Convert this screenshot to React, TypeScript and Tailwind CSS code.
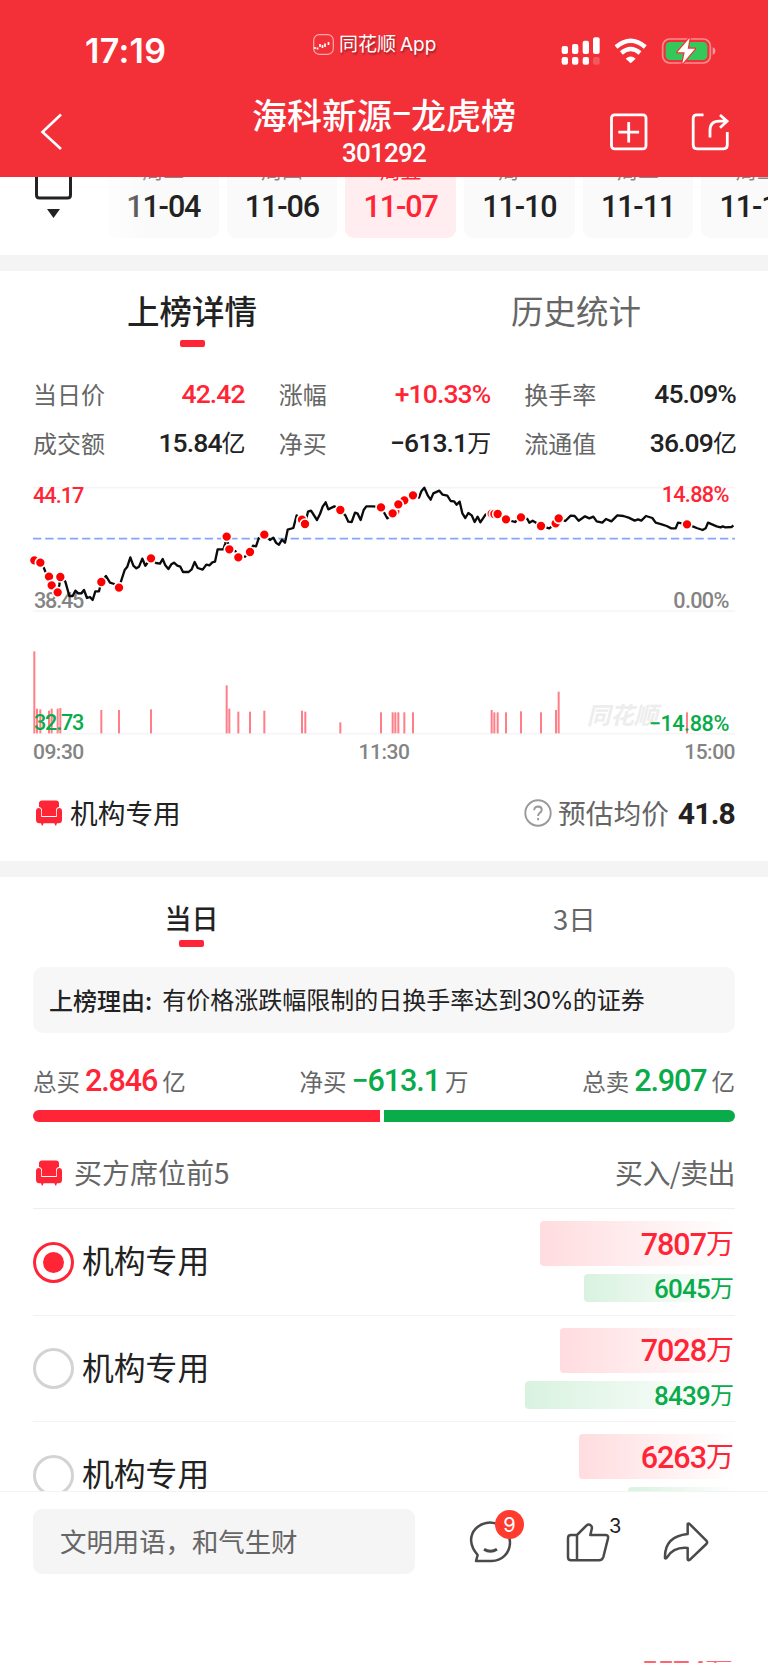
import { clsx } from "clsx";

const CJK = "font-['Noto_Sans_CJK_SC',sans-serif]";
const NUM = "font-[Roboto,'Noto_Sans_CJK_SC',sans-serif] font-medium";

const dates = [
  { week: "周二", day: "11-04" },
  { week: "周四", day: "11-06" },
  { week: "周五", day: "11-07", active: true },
  { week: "周一", day: "11-10" },
  { week: "周二", day: "11-11" },
  { week: "周三", day: "11-12" },
];

const stats = [
  { label: "当日价", value: "42.42", unit: "", up: true },
  { label: "涨幅", value: "+10.33%", unit: "", up: true },
  { label: "换手率", value: "45.09%", unit: "" },
  { label: "成交额", value: "15.84", unit: "亿" },
  { label: "净买", value: "−613.1", unit: "万" },
  { label: "流通值", value: "36.09", unit: "亿" },
];

const seats = [
  { name: "机构专用", buy: "7807", sell: "6045", buyWidth: 195, sellWidth: 151, checked: true },
  { name: "机构专用", buy: "7028", sell: "8439", buyWidth: 175.5, sellWidth: 210.5 },
  { name: "机构专用", buy: "6263", sell: "4312", buyWidth: 156, sellWidth: 107 },
];

// chart space: three units per pixel
const price =
  "100,271 121,278 131,292 136,305 147,320 155,346 173,367 178,345 181,321 196,335 208,378 218,378 226,362 235,370 244,370 252,360 261,384 270,381 278,390 286,364 297,364 304,336 318,318 330,338 343,342 357,353 374,300 382,290 391,262 400,287 409,295 417,290 427,266 436,287 453,265 468,279 480,281 488,267 496,286 505,297 514,283 522,278 532,287 541,290 549,306 566,306 575,298 584,276 593,294 608,299 619,284 628,286 637,277 645,275 653,238 670,238 676,220 680,200 688,238 706,243 715,262 735,260 750,246 759,227 768,229 776,205 793,194 810,210 820,203 828,218 837,224 846,209 855,218 863,179 880,174 890,136 906,149 915,162 924,125 933,122 951,150 960,132 968,110 977,97 985,118 1003,109 1021,120 1036,136 1045,155 1055,156 1065,128 1073,131 1082,150 1091,120 1099,109 1120,109 1143,112 1153,129 1162,145 1178,130 1186,124 1195,103 1213,91 1239,76 1257,83 1264,64 1273,53 1283,76 1292,89 1300,70 1318,62 1328,74 1342,77 1352,93 1362,94 1370,104 1379,95 1387,130 1396,144 1405,129 1415,136 1424,156 1433,140 1441,157 1457,133 1475,131 1493,132 1518,148 1545,156 1563,142 1582,147 1588,158 1598,152 1608,158 1623,168 1648,175 1667,160 1676,145 1696,153 1712,137 1724,138 1736,152 1755,139 1768,145 1780,140 1790,154 1807,158 1818,147 1834,154 1852,136 1870,138 1886,143 1904,152 1914,148 1924,152 1938,138 1957,144 1967,158 1985,163 2000,168 2014,175 2027,175 2034,158 2061,163 2080,170 2090,174 2108,180 2117,175 2124,158 2150,169 2162,172 2168,169 2176,172 2195,171 2200,166";

const dots = [
  [103, 271], [121, 278], [147, 320], [155, 346], [173, 367], [181, 321], [304, 336], [357, 353],
  [453, 265], [680, 200], [688, 238], [715, 262], [750, 246], [793, 194], [906, 149], [915, 162],
  [1021, 120], [1143, 112], [1186, 124], [1178, 130], [1213, 91], [1195, 103], [1239, 76],
  [1475, 131], [1483, 132], [1493, 132], [1518, 148], [1563, 142], [1623, 168], [1667, 160],
  [1676, 145], [2061, 163],
];

const volumes = [
  [103, 544], [111, 716], [121, 718], [147, 722], [155, 716], [173, 716], [181, 714], [304, 720],
  [357, 720], [453, 718], [680, 646], [688, 716], [715, 725], [750, 725], [793, 722], [906, 722],
  [916, 725], [1021, 757], [1143, 727], [1178, 727], [1186, 727], [1195, 727], [1213, 727],
  [1239, 727], [1475, 720], [1483, 727], [1493, 727], [1518, 727], [1563, 724], [1623, 727],
  [1668, 720], [1676, 665], [2061, 727],
];

function StatusIcons() {
  return (
    <svg width="156" height="30" viewBox="160 48 468 90" fill="none">
      <g fill="#fff">
        <rect x="162" y="78" width="19" height="24" rx="6" />
        <rect x="193" y="72" width="19" height="30" rx="6" />
        <rect x="225" y="62" width="19" height="40" rx="6" />
        <rect x="256" y="52" width="20" height="50" rx="6" />
        <rect x="162" y="111" width="19" height="23" rx="6" />
        <rect x="193" y="111" width="19" height="23" rx="6" />
        <rect x="225" y="111" width="19" height="23" rx="6" />
        <rect x="256" y="111" width="20" height="23" rx="6" opacity=".2" />
        <path d="M354 116q15-13 30 0l-15 14z" />
      </g>
      <path d="M325 81q44-37 88 0M341 99q28-24 56 0" stroke="#fff" strokeWidth="13" />
      <rect x="465" y="57" width="143" height="72" rx="21" stroke="#fff" strokeOpacity=".45" strokeWidth="5" />
      <path d="M615 82q8 2 8 11t-8 11z" fill="#fff" fillOpacity=".5" />
      <rect x="474" y="66" width="125" height="54" rx="13" fill="#34c759" />
      <path
        d="M546 54l-37 43h22l-7 34 38-45h-22z"
        fill="#fff"
        stroke="#f33038"
        strokeWidth="7"
        paintOrder="stroke"
        strokeLinejoin="round"
      />
    </svg>
  );
}

function Sofa() {
  return (
    <svg width="26" height="26" viewBox="0 0 26 26" fill="#ff2436">
      <path d="M6 .5h14q3 0 3 3V7q-3 .7-3 4v5H6v-5Q6 7.700 3 7V3.500q0-3 3-3z" />
      <path
        d="M2.500 8q2.700.2 2.700 3v6h15.600v-6q0-2.800 2.700-3 2.500.3 2.500 2.700v9q0 3.500-3.500 3.500h-19Q0 23.200 0 19.700v-9q0-2.400 2.500-2.700z"
        stroke="#fff"
        strokeWidth="1.400"
        paintOrder="stroke"
      />
      <path d="M5 23h2.600l-.8 2.600H5.800zM18.400 23H21l-.8 2.600h-1z" />
    </svg>
  );
}

function Chart() {
  return (
    <svg
      className="shrink-0 overflow-visible"
      width="703"
      height="260"
      viewBox="99 30 2109 780"
      fontFamily="Roboto, sans-serif"
      fontSize="65"
      fontWeight="500"
    >
      <path d="M99 53H2205M99 423H2205M99 791H2205" stroke="#f5f5f5" strokeWidth="5" />
      <path d="M99 206H2205" stroke="#84a5fb" strokeWidth="5.500" strokeDasharray="25 11.800" />
      <g fill="#848484">
        <text x="102" y="414" textLength="151">38.45</text>
        <text x="2020" y="414" textLength="168">0.00%</text>
      </g>
      <text
        x="1760"
        y="762"
        fontFamily="Noto Sans CJK SC, sans-serif"
        fontSize="71"
        fontWeight="700"
        fontStyle="italic"
        fill="#ededed"
      >
        同花顺
      </text>
      <g fill="#ff2436">
        <text x="99" y="98" textLength="154">44.17</text>
        <text x="1985" y="97" textLength="203">14.88%</text>
      </g>
      {volumes.map(([x, y]) => (
        <rect key={x} x={x - 3} y={y} width="6" height={790 - y} fill="#ff7e88" />
      ))}
      <g fill="#09ab4b">
        <text x="102" y="780" textLength="151">32.73</text>
        <text x="1946" y="782" textLength="242">−14.88%</text>
      </g>
      <polyline points={price} fill="none" stroke="#0b0b0b" strokeWidth="7" strokeLinejoin="round" />
      {dots.map(([x, y]) => (
        <circle key={x} cx={x} cy={y} r="15" fill="#f00" stroke="#fff" strokeWidth="5" />
      ))}
    </svg>
  );
}

function Tab({ label, active, className }: { label: string; active?: boolean; className?: string }) {
  return (
    <div
      className={clsx(
        "flex flex-1 flex-col items-center",
        active ? "font-medium text-[#222]" : "text-[#666]",
        className
      )}
    >
      <span>{label}</span>
      {active && <span className="h-[7px] w-[25px] rounded-[2px] bg-[#ff2436]" />}
    </div>
  );
}

function Total({ label, value, unit, color }: { label: string; value: string; unit: string; color: string }) {
  return (
    <div className="flex items-baseline text-[23.500px] leading-[36px] text-[#666]">
      <span>{label}</span>
      <span className={clsx("ml-[5px] mr-[5px] text-[30.500px] tracking-[-1.1px]", NUM, color)}>{value}</span>
      <span>{unit}</span>
    </div>
  );
}

export default function App() {
  return (
    <div className={clsx("relative flex h-[1663px] w-[768px] flex-col overflow-hidden bg-white text-[#222]", CJK)}>
      {/* Header */}
      <header className="h-[177px] shrink-0 bg-[#f33038] text-white">
        <div className="flex h-[88px] items-start pl-[85px] pr-[51px]">
          <span className="mt-[34px] w-[228px] font-[Inter,sans-serif] text-[34px] font-semibold leading-[34px] tracking-[0.3px]">
            17:19
          </span>
          <div className="mt-[32px] flex items-center gap-[5px]">
            <svg width="21" height="21" viewBox="0 0 21 21" fill="none">
              <rect x=".7" y=".7" width="19.600" height="19.600" rx="5.500" stroke="#fff" strokeOpacity=".6" strokeWidth="1.200" />
              <path d="M2 13v2M4.500 13.500v2M7 10v3M9.500 11v3M12 9.500V13M15.500 8v3" stroke="#fff" strokeWidth="1.700" />
            </svg>
            <span className="text-[19px] leading-[22px] [text-shadow:1px_2px_2px_rgba(0,0,0,.35)]">
              同花顺<span className="ml-[4px] font-[Inter,sans-serif] text-[19px]">App</span>
            </span>
          </div>
          <div className="ml-auto mt-[36px]">
            <StatusIcons />
          </div>
        </div>
        <div className="grid grid-cols-[1fr_auto_1fr] pl-[39px] pr-[39px]">
          <svg className="ml-[1px] mt-[24px]" width="24" height="40" viewBox="0 0 24 40" fill="none" stroke="#fff" strokeWidth="2.600">
            <path d="M21 2.500L2.500 20 21 37" />
          </svg>
          <div className="flex flex-col items-center">
            <h1 className="mt-[6px] flex text-[35px] font-medium leading-[40px]">
              海科新源
              <span className="flex w-[19px] items-center justify-center">
                <span className="font-[Roboto,sans-serif] text-[32px] font-medium">–</span>
              </span>
              龙虎榜
            </h1>
            <span className={clsx("mt-[4px] text-[26px] leading-[30px] tracking-[-0.8px]", NUM)}>301292</span>
          </div>
          <div className="mt-[24px] flex justify-end gap-[41px]">
            <svg width="40" height="40" viewBox="0 0 40 40" fill="none" stroke="#fff" strokeWidth="2.800">
              <rect x="3.500" y="2.800" width="34.500" height="34" rx="3" />
              <path d="M20.700 10v20.500M10.300 20.200h20.800" />
            </svg>
            <svg width="40" height="40" viewBox="0 0 40 40" fill="none" stroke="#fff" strokeWidth="2.800">
              <path d="M14.500 2.800H8Q4.200 2.800 4.200 6.500v26.500q0 3.800 3.800 3.800h26.500q3.800 0 3.800-3.800V20" />
              <path d="M21 25.500V18.500q0-9.300 9-9.300h7M31 3l7 6.200-7 6.500" />
            </svg>
          </div>
        </div>
      </header>

      {/* Date strip */}
      <div className="relative flex h-[78px] shrink-0 overflow-hidden">
        <div className="flex w-[108px] shrink-0 flex-col pl-[35px]">
          <svg width="37" height="42" viewBox="0 0 37 42" fill="none">
            <path d="M1.500-3V18q0 3 3 3h28q3 0 3-3V-3" stroke="#222" strokeWidth="3" />
            <path d="M12 32h13l-6.500 9z" fill="#222" />
          </svg>
        </div>
        <div className="flex gap-[8.200px]">
          {dates.map((d) => (
            <div
              key={d.day}
              className={clsx(
                "flex h-[61px] w-[110.500px] shrink-0 flex-col items-center rounded-b-[9px]",
                d.active ? "bg-[#ffedef] text-[#ff2436]" : "bg-[#fafafa]"
              )}
            >
              <span className={clsx("mt-[-20px] text-[21px] leading-[24px]", !d.active && "text-[#888]")}>{d.week}</span>
              <span className={clsx("mt-[9px] text-[30.500px] leading-[34px] tracking-[-1.1px]", NUM)}>{d.day}</span>
            </div>
          ))}
        </div>
        <div className="absolute left-[92px] top-0 h-full w-[60px] bg-linear-to-r from-white to-white/0" />
      </div>
      <div className="h-[16px] shrink-0 bg-[#f4f4f4]" />

      {/* Detail */}
      <section className="flex h-[590px] shrink-0 flex-col">
        <div className="flex h-[99px] text-[32.500px] leading-[40px]">
          <Tab label="上榜详情" active className="gap-[10px] pt-[19px]" />
          <Tab label="历史统计" className="pt-[19px]" />
        </div>
        <div className="grid grid-cols-3 gap-x-[34px] px-[33px] pr-[32px]">
          {stats.map((s) => (
            <div key={s.label} className="flex h-[49px] items-center justify-between leading-[36px]">
              <span className="relative top-[-1px] text-[24px] text-[#666]">{s.label}</span>
              <span className={clsx("text-[26.500px] tracking-[-0.9px]", NUM, s.up && "text-[#ff2436]")}>
                {s.value}
                <span className="text-[24px] font-normal">{s.unit}</span>
              </span>
            </div>
          ))}
        </div>
        <div className="mt-[12px] px-[33px]">
          <Chart />
          <div className={clsx("flex h-[24px] justify-between text-[21px] leading-[24px] text-[#848484] tracking-[-0.5px]", NUM)}>
            <span>09:30</span>
            <span>11:30</span>
            <span>15:00</span>
          </div>
        </div>
        <div className="mt-[29px] flex h-[40px] items-center px-[33px] text-[27.700px]">
          <span className="ml-[3px] mr-[8px]">
            <Sofa />
          </span>
          <span>机构专用</span>
          <svg className="ml-auto mr-[6px]" width="28" height="28" viewBox="0 0 28 28" fill="none" stroke="#999" strokeWidth="1.900">
            <circle cx="14" cy="14" r="12.700" />
            <path d="M10.200 11.200q.2-3.700 3.900-3.700 3.600.1 3.700 3.300 0 1.800-2 3.100-1.700 1.100-1.700 3.100M14.100 19v2.200" />
          </svg>
          <span className="text-[#666]">预估均价</span>
          <span className="ml-[9px] font-[Roboto,sans-serif] text-[30px] font-bold tracking-[-0.8px]">41.8</span>
        </div>
      </section>
      <div className="h-[16px] shrink-0 bg-[#f4f4f4]" />

      {/* Ranking */}
      <section className="flex shrink-0 flex-col px-[33px]">
        <div className="-mx-[33px] flex h-[90px] text-[27px] leading-[36px]">
          <Tab label="当日" active className="gap-[4px] pt-[23px]" />
          <Tab label="3日" className="pr-[2px] pt-[23px] text-[27.500px]" />
        </div>
        <div className="flex h-[66px] items-center rounded-[10px] bg-[#f7f7f7] px-[16px] text-[24px]">
          <span className="font-medium">上榜理由:</span>
          <span className="ml-[10px]">
            有价格涨跌幅限制的日换手率达到
            <span className="font-[Inter,sans-serif] tracking-[-1px]">30%</span>
            的证券
          </span>
        </div>
        <div className="mt-[30px] flex h-[36px] justify-between">
          <Total label="总买" value="2.846" unit="亿" color="text-[#ff2436]" />
          <Total label="净买" value="−613.1" unit="万" color="text-[#09ab4b]" />
          <Total label="总卖" value="2.907" unit="亿" color="text-[#09ab4b]" />
        </div>
        <div className="mt-[11px] flex h-[12px] gap-[4px]">
          <div className="w-[347px] rounded-l-full bg-[#ff2436]" />
          <div className="flex-1 rounded-r-full bg-[#09ab4b]" />
        </div>
        <div className="mt-[16px] flex h-[71px] items-center border-b-[1.500px] border-[#eee] text-[28px] leading-[40px] text-[#666]">
          <span className="ml-[3px] mr-[12px]">
            <Sofa />
          </span>
          <span className="mt-[-2px]">买方席位前5</span>
          <span className="ml-auto mt-[-2px] tracking-[-0.6px]">买入/卖出</span>
        </div>
        <div className="h-[282px] overflow-hidden">
          {seats.map((s, i) => (
            <div key={i} className="flex h-[106.500px] border-b-[1.500px] border-[#f3f3f3]">
              <div className="flex flex-1 items-center pt-[1px]">
                <span
                  className={clsx(
                    "flex size-[41px] items-center justify-center rounded-full border-3",
                    s.checked ? "border-[#ff2436]" : "border-[#d3d3d3]"
                  )}
                >
                  {s.checked && <span className="size-[21px] rounded-full bg-[#ff2436]" />}
                </span>
                <span className="ml-[8px] mt-[-4px] text-[31.800px]">{s.name}</span>
              </div>
              <div className={clsx("flex flex-col items-end pt-[12px]", NUM)}>
                <div
                  className="flex h-[45px] items-center justify-end rounded-l-[4px] bg-linear-to-r from-[#ffdcdf] to-white pr-[1px] pt-[2px] text-[30.500px] tracking-[-1px] text-[#ff2436]"
                  style={{ width: s.buyWidth }}
                >
                  {s.buy}
                  <span className="text-[28px] font-normal tracking-normal">万</span>
                </div>
                <div
                  className="mt-[8px] flex h-[28px] items-center justify-end rounded-l-[4px] bg-linear-to-r from-[#d9f2e0] to-white pr-[1px] pt-[2px] text-[26px] leading-[28px] tracking-[-0.8px] text-[#09ab4b]"
                  style={{ width: s.sellWidth }}
                >
                  {s.sell}
                  <span className="text-[24px] font-normal tracking-normal">万</span>
                </div>
              </div>
            </div>
          ))}
        </div>
      </section>

      {/* Comment bar */}
      <footer className="flex h-[170px] shrink-0 items-start border-t border-[#f3f3f3] pl-[33px] pt-[17px]">
        <div className="flex h-[65px] w-[382px] shrink-0 items-center rounded-[9px] bg-[#f5f5f5] px-[27px] pb-[2px] text-[26.400px] text-[#666]">
          文明用语，和气生财
        </div>
        <div className="ml-[51px] mt-[3px] flex shrink-0 gap-[39px]">
          <div className="relative">
            <svg width="58" height="60" viewBox="0 0 174 180" fill="none" stroke="#4a4a4a" strokeWidth="7.500" strokeLinejoin="round">
              <path d="M77 147H30l5-18C11 102 9 72 29 50c16-17 45-25 70-11 22 12 33 32 33 52 0 34-26 56-55 56z" />
              <path d="M54 112q19 12 39 0" strokeWidth="9" />
            </svg>
            <span className="absolute left-[29px] top-[-2px] flex size-[29px] items-center justify-center rounded-full bg-[#ff3b30] font-[Inter,sans-serif] text-[20px] text-white">
              9
            </span>
          </div>
          <div className="relative">
            <svg width="58" height="60" viewBox="0 0 174 180" fill="none" stroke="#4a4a4a" strokeWidth="7.500" strokeLinejoin="round">
              <path d="M42 69 70 41q8-7 15 1 3 4 1 10l-4 17h45q10 0 8 10l-14 56q-3 10-13 10H24q-9 0-9-9V78q0-9 9-9zM42 69v76" />
            </svg>
            <span className="absolute left-[46px] top-[1px] font-[Inter,sans-serif] text-[20px] leading-[26px]">3</span>
          </div>
          <svg width="58" height="60" viewBox="0 0 174 180" fill="none" stroke="#4a4a4a" strokeWidth="7.500" strokeLinejoin="round">
            <path d="M83 36q3-3 7 1l49 49q5 5 0 10l-49 47q-7 4-7-3v-32q-42-4-62 28-3 5-6 2-2-65 68-72z" />
          </svg>
        </div>
      </footer>
      <div className="flex h-[2px] shrink-0 justify-end overflow-hidden pr-[35px] opacity-70">
        <span className={clsx("mt-[-6px] text-[30px] leading-[34px] tracking-[-1px] text-[#ff2436]", NUM)}>
          5574<span className="text-[28px] font-normal tracking-normal">万</span>
        </span>
      </div>
    </div>
  );
}
